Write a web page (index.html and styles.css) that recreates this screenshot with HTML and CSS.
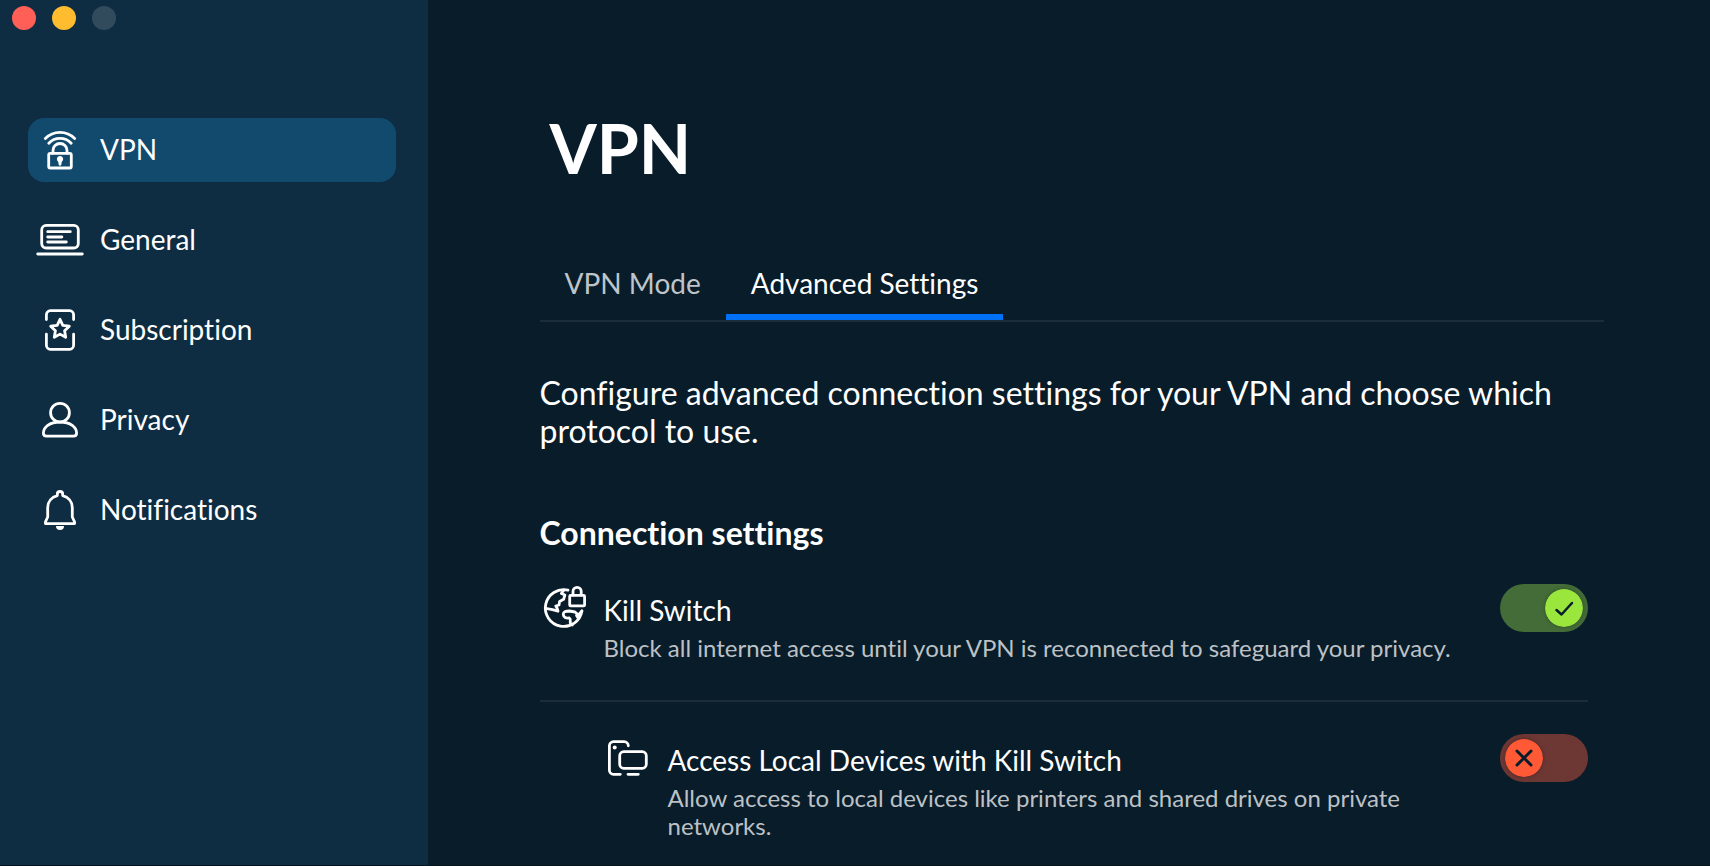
FILE: index.html
```html
<!DOCTYPE html>
<html lang="en">
<head>
<meta charset="utf-8">
<title>VPN – Advanced Settings</title>
<link rel="stylesheet" href="styles.css">
</head>
<body>
<div class="window">
  <aside class="sidebar">
    <div class="window-controls">
      <button class="dot dot-close" aria-label="Close"></button>
      <button class="dot dot-minimize" aria-label="Minimize"></button>
      <button class="dot dot-zoom" aria-label="Zoom" disabled></button>
    </div>
    <nav class="nav">
      <a class="nav-item active" href="#vpn" aria-current="page">
        <svg class="icon" viewBox="0 0 48 48" aria-hidden="true"><path d="M9.300 12.500a20.500 20.500 0 0 1 29.400 0M12.800 17.200a15.500 15.500 0 0 1 22.400 0M17 27v-2.500a7 7 0 0 1 14 0V27"/><rect x="12.700" y="27.400" width="22.600" height="14.600" rx="1.500"/><path class="fill" d="M24 30a3.200 3.200 0 0 1 1.700 5.900l-.3 2.400a1.400 1.400 0 0 1-2.800 0l-.3-2.400A3.200 3.200 0 0 1 24 30z"/></svg>
        <span>VPN</span>
      </a>
      <a class="nav-item" href="#general">
        <svg class="icon" viewBox="0 0 48 48" aria-hidden="true"><rect x="5.700" y="9.400" width="36.600" height="22.600" rx="4.500"/><path d="M11.700 15.700h22.600M11.700 21h14.200M11.700 26h18.600M1.700 38h44.600"/></svg>
        <span>General</span>
      </a>
      <a class="nav-item" href="#subscription">
        <svg class="icon" viewBox="0 0 48 48" aria-hidden="true"><path d="M10.400 13.500V8.700a4 4 0 0 1 4-4h19.200a4 4 0 0 1 4 4v4.800M10.400 28.200v11.100a4 4 0 0 0 4 4h19.200a4 4 0 0 0 4-4V28.200"/><path d="M24 13.300l2.800 6.100 6.500.8-4.700 4.600 1.100 6.500-5.700-3.200-5.700 3.200 1.100-6.500-4.700-4.600 6.500-.8z"/></svg>
        <span>Subscription</span>
      </a>
      <a class="nav-item" href="#privacy">
        <svg class="icon" viewBox="0 0 48 48" aria-hidden="true"><circle cx="24" cy="16.700" r="9.400"/><path d="M10.400 40.200h27.200q3 0 3-3.200c0-5.400-6-11-16.600-11s-16.600 5.600-16.600 11q0 3.200 3 3.200z"/></svg>
        <span>Privacy</span>
      </a>
      <a class="nav-item" href="#notifications">
        <svg class="icon" viewBox="0 0 48 48" aria-hidden="true"><path d="M21.300 9.600V8.200a2.700 2.700 0 0 1 5.400 0v1.400c5.500 1.500 9.600 6 9.600 12V31l2.300 5v1.600H9.400V36l2.300-5v-9.400c0-6 4.100-10.500 9.600-12z"/><path class="fill" d="M20 40h8a4 4 0 0 1-8 0z"/></svg>
        <span>Notifications</span>
      </a>
    </nav>
  </aside>
  <main class="content">
    <h1 class="title">VPN</h1>
    <div class="tabs" role="tablist">
      <button class="tab" role="tab" aria-selected="false">VPN Mode</button>
      <button class="tab selected" role="tab" aria-selected="true">Advanced Settings</button>
    </div>
    <div class="panel" role="tabpanel">
      <p class="intro">Configure advanced connection settings for your VPN and choose which protocol to use.</p>
      <h2 class="section-title">Connection settings</h2>
      <div class="setting">
        <svg class="icon" viewBox="0 0 48 48" aria-hidden="true"><path d="M28 6.100A18.400 18.400 0 1 0 41.900 27"/><path d="M5.500 24.300l7 1.300 5.500 1.600-1-3.200-1.200-2 3.200-1 .6-3.500 4-2.200 1.300-4.300-3.600-1.500 2.700-3.500"/><path d="M41.900 27l-3.400 4-3.500-3-5.500-1c-4 0-6.500 1-6.200 3.500.3 3 2.500 4 6 3.500 2 1 .6 3 1 5l2 2M36.500 31.500l2 3"/><rect x="29.700" y="11.400" width="14.900" height="10.500" rx="1"/><path d="M33 11V7.500a4 4 0 0 1 8.200 0V11"/></svg>
        <div class="setting-text">
          <label class="setting-name" for="kill-switch">Kill Switch</label>
          <p class="setting-note">Block all internet access until your VPN is reconnected to safeguard your privacy.</p>
        </div>
        <div class="switch">
          <input type="checkbox" role="switch" id="kill-switch" checked>
          <svg class="knob" viewBox="0 0 38 38" aria-hidden="true"><circle cx="19" cy="19" r="19"/><path class="mark-on" d="M11.500 21l5 4.500L27 14"/><path class="mark-off" d="M12 12l14 14M26 12L12 26"/></svg>
        </div>
      </div>
      <div class="setting nested">
        <svg class="icon" viewBox="0 0 48 48" aria-hidden="true"><path d="M24.300 11.800a4.100 4.100 0 0 0-4.100-4.100H9.500a4.100 4.100 0 0 0-4.100 4.100v24.400a4.100 4.100 0 0 0 4.100 4.100h6.800M24 40.300h10.300"/><rect x="15.700" y="17.700" width="26.600" height="16.600" rx="4"/><circle class="fill" cx="10.700" cy="13.600" r="2"/></svg>
        <div class="setting-text">
          <label class="setting-name" for="local-devices">Access Local Devices with Kill Switch</label>
          <p class="setting-note">Allow access to local devices like printers and shared drives on private networks.</p>
        </div>
        <div class="switch">
          <input type="checkbox" role="switch" id="local-devices">
          <svg class="knob" viewBox="0 0 38 38" aria-hidden="true"><circle cx="19" cy="19" r="19"/><path class="mark-on" d="M11.500 21l5 4.500L27 14"/><path class="mark-off" d="M12 12l14 14M26 12L12 26"/></svg>
        </div>
      </div>
    </div>
  </main>
</div>
</body>
</html>
```
FILE: styles.css
```css
* { box-sizing: border-box; }
body { margin: 0; font-family: Lato, "Open Sans", sans-serif; font-variant-ligatures: none; background: #081c2a; color: #fff; }
h1, h2, p { margin: 0; }
.window { display: flex; min-height: 100vh; border-bottom: 1px solid #061420; }

/* Sidebar */
.sidebar { flex: 0 0 25%; background: #0e2d42; }
.window-controls { display: flex; gap: 16px; padding: 6px 12px; }
.dot { width: 24px; height: 24px; padding: 0; border: 0; border-radius: 50%; }
.dot-close { background: #ff5f57; }
.dot-minimize { background: #febc2e; }
.dot-zoom { background: #314a5c; }
.nav { display: flex; flex-direction: column; gap: 26px; padding: 82px 32px 0 28px; }
.nav-item { display: flex; align-items: center; gap: 16px; height: 64px; padding: 0 8px; border-radius: 16px; color: #fff; font-size: 28px; line-height: 32px; text-decoration: none; }
.nav-item span { padding-bottom: 2px; }
.nav-item.active { background: #124a6e; }
.icon { flex: none; width: 48px; height: 48px; fill: none; stroke: #fff; stroke-width: 2.800; stroke-linecap: round; stroke-linejoin: round; }
.icon .fill { fill: #fff; stroke: none; }

/* Content */
.content { flex: 1; min-width: 0; padding: 108px 106px 20px 112px; }
.title { padding-left: 10px; font-size: 68px; line-height: 80px; }
.tabs { display: flex; margin-top: 72px; border-bottom: 2px solid #1c2d3a; }
.tab { height: 60px; padding: 0 25px 8px; border: 0; border-bottom: 6px solid transparent; background: none; color: #bfc4c8; font: inherit; font-size: 28px; font-variant-ligatures: none; }
.tab.selected { color: #fff; border-bottom-color: #0070f6; }
.panel { padding-right: 16px; }
.intro { margin-top: 52px; font-size: 32px; line-height: 38px; }
.section-title { margin-top: 64px; font-size: 32px; line-height: 38px; }

/* Settings */
.setting { display: flex; align-items: flex-start; gap: 16px; padding: 32px 0 38px; }
.setting:last-child { padding-bottom: 0; }
.setting.nested { padding-left: 64px; border-top: 2px solid #1c2d3a; }
.setting-text { flex: 1; display: flex; flex-direction: column; padding: 2px 32px 0 0; }
.setting-name { font-size: 28px; line-height: 48px; }
.setting-note { font-size: 24px; line-height: 28px; color: #bdc1c5; }

/* Switch */
.switch { display: grid; align-items: center; width: 88px; height: 48px; }
.switch > * { grid-area: 1 / 1; }
.switch input { appearance: none; width: 100%; height: 100%; margin: 0; border-radius: 24px; background: #6d3734; }
.switch input:checked { background: #446c38; }
.knob { width: 38px; height: 38px; margin: 0 5px; border-radius: 50%; box-shadow: 0 0 4px rgba(0, 0, 0, .25); pointer-events: none; fill: #ff5935; }
.knob path { fill: none; stroke: #081c2a; stroke-width: 2.500; stroke-linecap: round; stroke-linejoin: round; }
.knob .mark-off { stroke-width: 3; }
.knob .mark-on, input:checked + .knob .mark-off { display: none; }
input:checked + .knob { justify-self: end; fill: #9be63c; }
input:checked + .knob .mark-on { display: inline; }
```
